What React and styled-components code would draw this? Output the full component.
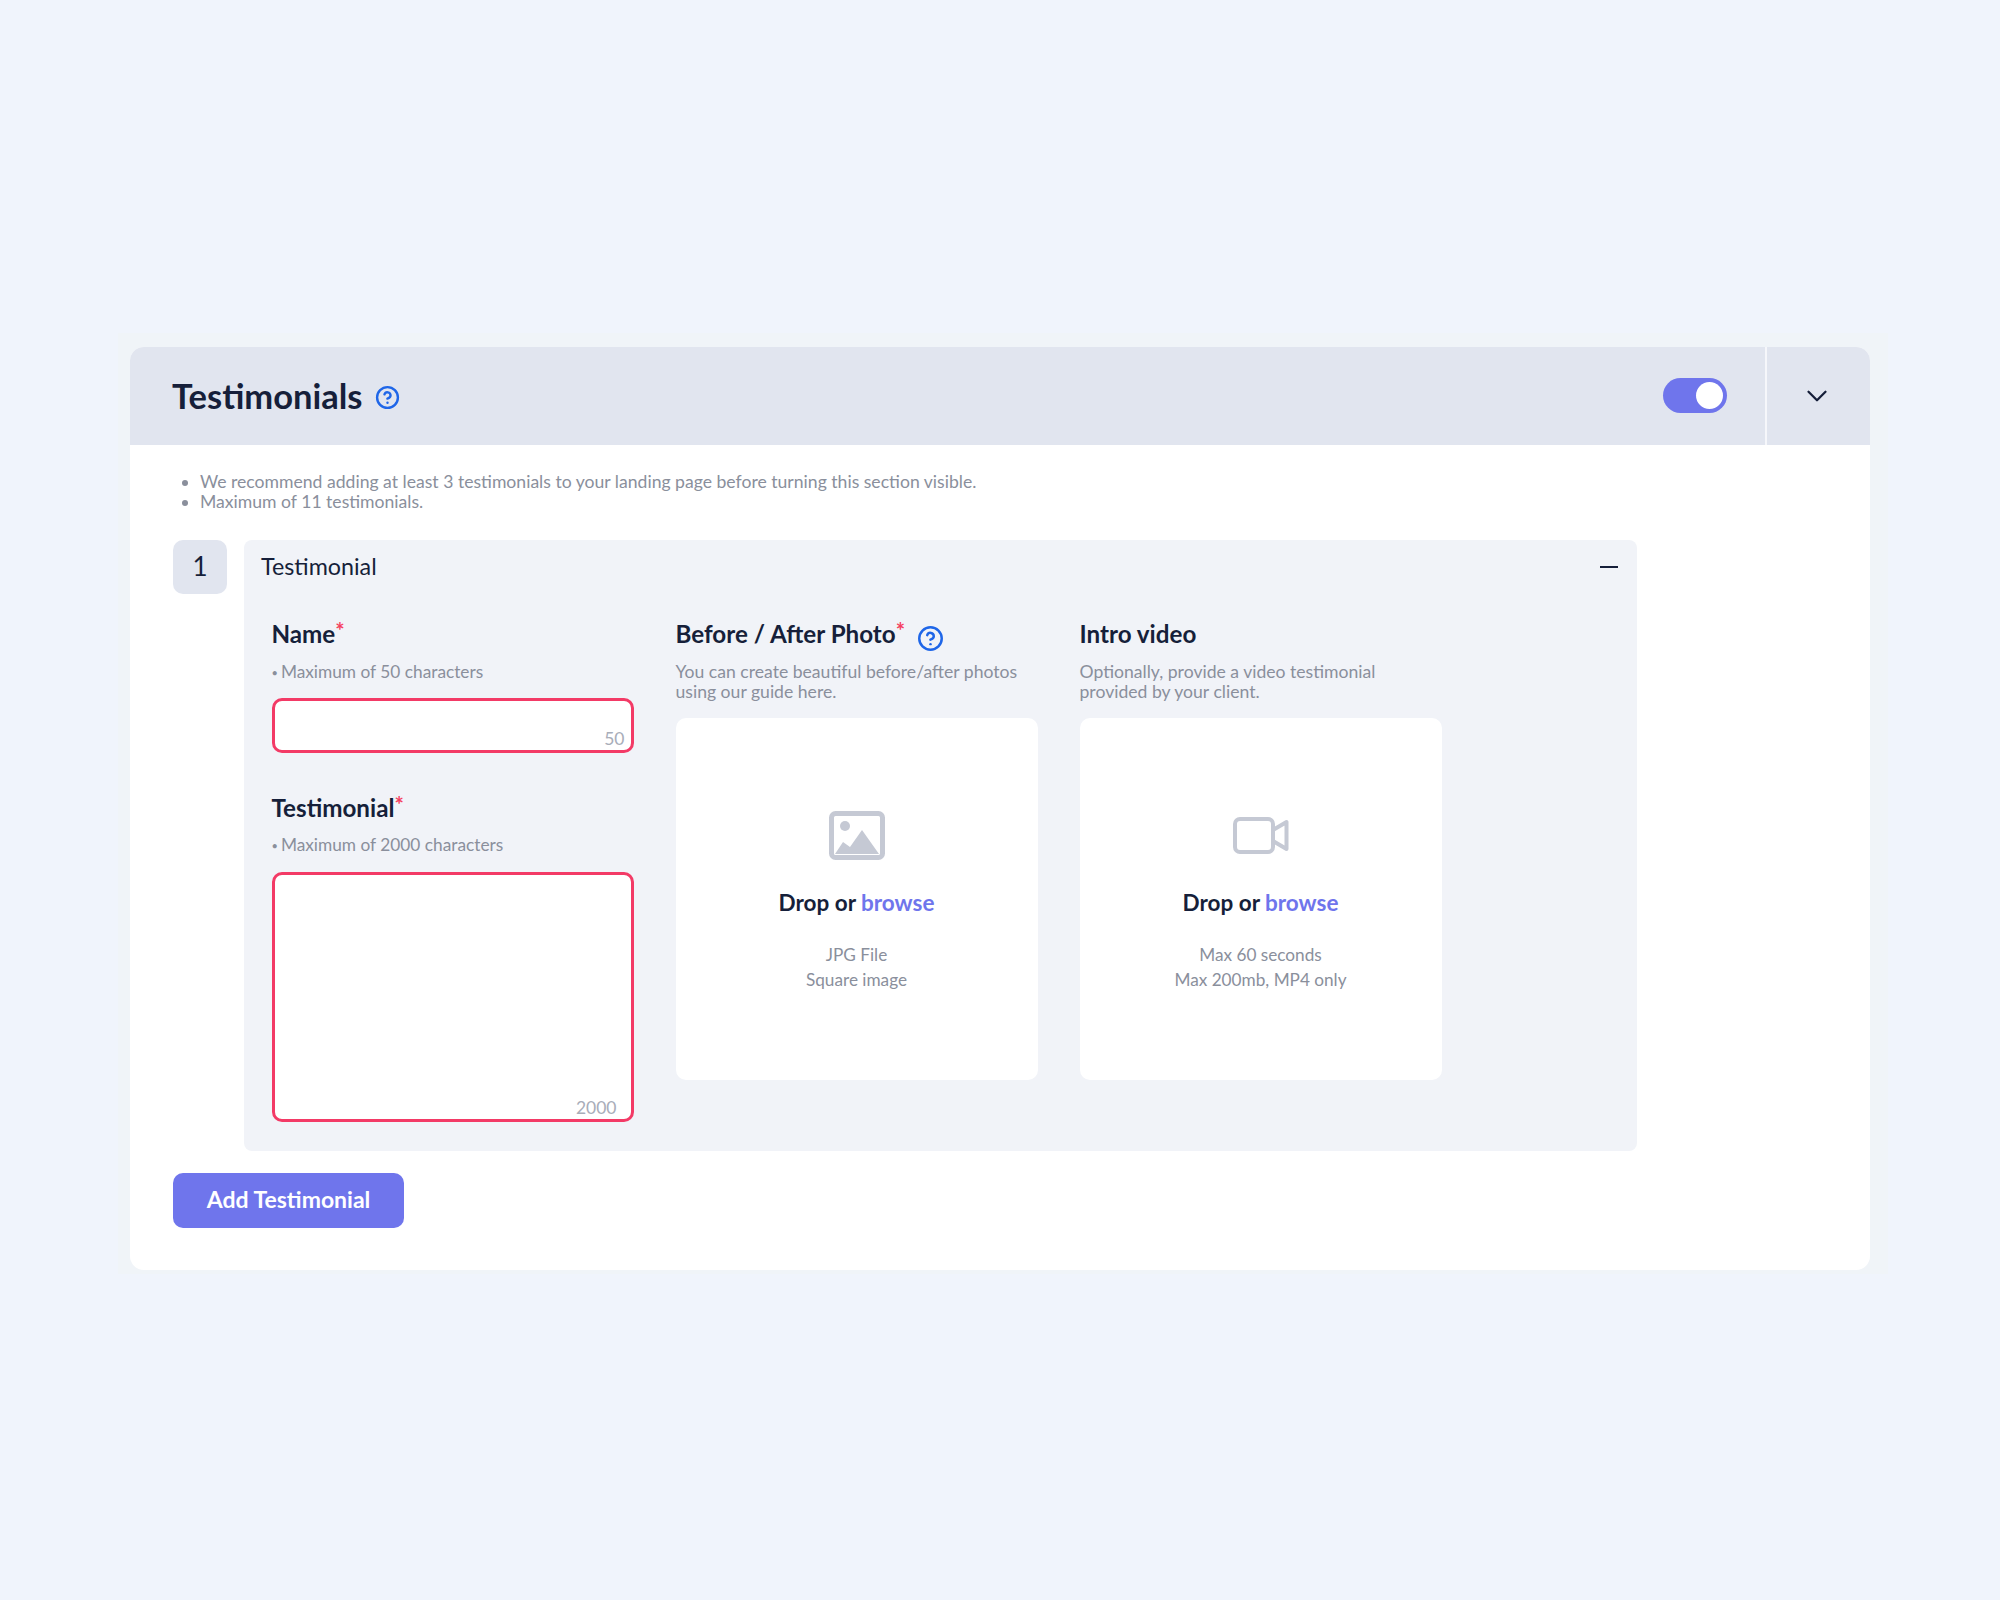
import React from "react";
import styled, { createGlobalStyle } from "styled-components";
import { CircleHelp, ChevronDown } from "lucide-react";

const GlobalStyle = createGlobalStyle`
  html, body {
    margin: 0;
    padding: 0;
    background: #f0f4fc;
    font-family: "Lato", "Liberation Sans", sans-serif;
  }
  * {
    box-sizing: border-box;
  }
`;

const Page = styled.div`
  min-height: 1600px;
  padding: 333px 112px 0 118px;
`;

const Halo = styled.div`
  padding: 14px 18px 4px 12px;
  background: #f0f4f8;
`;

const Card = styled.section`
  background: #ffffff;
  border-radius: 14px;
  overflow: hidden;
`;

const Header = styled.header`
  display: flex;
  align-items: center;
  height: 98px;
  padding-left: 42px;
  background: #e1e5ef;
`;

const Title = styled.h1`
  margin: 0;
  font-size: 34.5px;
  line-height: 40px;
  font-weight: 700;
  color: #161f3a;
`;

const HeaderHelp = styled.span`
  display: flex;
  margin: 3px 0 0 12px;
  color: #1f66e8;
`;

const Toggle = styled.div`
  display: flex;
  justify-content: flex-end;
  align-items: center;
  width: 64px;
  height: 35px;
  margin: -1px 38px 0 auto;
  padding-right: 4px;
  border-radius: 18px;
  background: #6f75ec;
`;

const Knob = styled.div`
  width: 27px;
  height: 27px;
  border-radius: 50%;
  background: #ffffff;
`;

const Collapse = styled.div`
  display: flex;
  justify-content: center;
  align-items: center;
  align-self: stretch;
  width: 105px;
  padding-right: 3px;
  border-left: 2px solid #f6f7fb;
  color: #161f3a;
`;

const Body = styled.div`
  padding: 27px 43px 41px;
`;

const Notes = styled.ul`
  margin: 0 0 28px;
  padding-left: 27px;
  font-size: 17.6px;
  line-height: 20px;
  color: #8a8f9c;
`;

const Row = styled.div`
  display: flex;
  gap: 17px;
`;

const Number = styled.div`
  display: flex;
  justify-content: center;
  align-items: center;
  flex: none;
  width: 54px;
  height: 54px;
  padding-bottom: 2px;
  border-radius: 10px;
  background: #e1e5ef;
  font-size: 26px;
  color: #161f3a;
`;

const Item = styled.div`
  width: 1393px;
  padding-bottom: 29px;
  border-radius: 8px;
  background: #f1f3f8;
`;

const ItemHeader = styled.div`
  display: flex;
  justify-content: space-between;
  align-items: center;
  height: 54px;
  padding: 0 19px 2px 17px;
  font-size: 23.3px;
  color: #161f3a;
`;

const Minus = styled.div`
  width: 18px;
  height: 2px;
  margin-top: 2px;
  background: #161f3a;
`;

const Columns = styled.div`
  display: grid;
  grid-template-columns: repeat(3, 362px);
  gap: 42px;
  padding: 25px 0 0 27.5px;
`;

const Field = styled.div`
  & + & {
    margin-top: 40px;
  }
`;

const Label = styled.div`
  display: flex;
  height: 30px;
  font-size: 24.2px;
  line-height: 30px;
  font-weight: 700;
  color: #161f3a;
`;

const Required = styled.span`
  margin-top: -3px;
  font-size: 22px;
  color: #f5405f;
`;

const LabelHelp = styled.span`
  display: flex;
  margin: 6px 0 0 12px;
  color: #1f66e8;
`;

const Hint = styled.p`
  margin: ${(props) => props.$top || 13}px 0 ${(props) => props.$gap || 16}px;
  font-size: ${(props) => props.$size || 17.6}px;
  line-height: 20px;
  color: #8a8f9c;
`;

const Bullet = styled.span`
  margin-right: 3px;
  font-size: 11px;
  vertical-align: 1px;
`;

const InputBox = styled.div`
  position: relative;
  height: ${(props) => props.$height}px;
  border: 3px solid #f33a66;
  border-radius: 10px;
  background: #ffffff;
`;

const Count = styled.span`
  position: absolute;
  right: ${(props) => props.$right}px;
  bottom: 0;
  font-size: 17.5px;
  line-height: 22px;
  color: #a8adb9;
`;

const Drop = styled.div`
  display: flex;
  flex-direction: column;
  align-items: center;
  height: 362px;
  padding-top: 93px;
  border-radius: 10px;
  background: #ffffff;
  text-align: center;
`;

const DropIcon = styled.div`
  display: flex;
  align-items: center;
  height: 49px;
`;

const DropTitle = styled.div`
  margin-top: 28px;
  font-size: 22.5px;
  line-height: 30px;
  font-weight: 700;
  color: #161f3a;
`;

const Browse = styled.span`
  color: #6f75ec;
`;

const DropNote = styled.div`
  margin-top: 24px;
  font-size: 17.2px;
  line-height: 25px;
  color: #8a8f9c;
`;

const AddButton = styled.button`
  display: block;
  width: 231px;
  height: 55px;
  margin: 22px 0 1px;
  padding: 0 0 3px;
  border: 0;
  border-radius: 10px;
  background: #6f75ec;
  font-family: inherit;
  font-size: 23px;
  font-weight: 700;
  color: #ffffff;
`;

const ImageIcon = () => (
  <svg width="56" height="49" viewBox="0 0 56 49">
    <rect x="2.5" y="2.5" width="51" height="44" rx="4" fill="none" stroke="#c5c9d4" strokeWidth="5" />
    <circle cx="16" cy="15" r="5" fill="#c5c9d4" />
    <path d="M6 43 L14 31 L21 36 L33 19 L50 43 Z" fill="#c5c9d4" />
  </svg>
);

const VideoIcon = () => (
  <svg width="56" height="37" viewBox="0 0 56 37">
    <rect x="2" y="2" width="38" height="33" rx="5" fill="none" stroke="#c5c9d4" strokeWidth="4" />
    <path d="M40 13 L53.5 5 V32 L40 24" fill="none" stroke="#c5c9d4" strokeWidth="4" strokeLinejoin="round" />
  </svg>
);

const App = () => {
  return (
    <Page>
      <GlobalStyle />
      <Halo>
        <Card>
          <Header>
            <Title>Testimonials</Title>
            <HeaderHelp>
              <CircleHelp size={25} strokeWidth={2.3} />
            </HeaderHelp>
            <Toggle>
              <Knob />
            </Toggle>
            <Collapse>
              <ChevronDown size={34} strokeWidth={1.6} />
            </Collapse>
          </Header>
          <Body>
            <Notes>
              <li>We recommend adding at least 3 testimonials to your landing page before turning this section visible.</li>
              <li>Maximum of 11 testimonials.</li>
            </Notes>
            <Row>
              <Number>1</Number>
              <Item>
                <ItemHeader>
                  Testimonial
                  <Minus />
                </ItemHeader>
                <Columns>
                  <div>
                    <Field>
                      <Label>
                        Name<Required>*</Required>
                      </Label>
                      <Hint $gap={15} $size={17.3}>
                        <Bullet>•</Bullet>Maximum of 50 characters
                      </Hint>
                      <InputBox $height={55}>
                        <Count $right={6}>50</Count>
                      </InputBox>
                    </Field>
                    <Field>
                      <Label>
                        Testimonial<Required>*</Required>
                      </Label>
                      <Hint $top={12} $size={17.3}>
                        <Bullet>•</Bullet>Maximum of 2000 characters
                      </Hint>
                      <InputBox $height={250}>
                        <Count $right={14}>2000</Count>
                      </InputBox>
                    </Field>
                  </div>
                  <div>
                    <Label>
                      Before / After Photo<Required>*</Required>
                      <LabelHelp>
                        <CircleHelp size={27} strokeWidth={2.2} />
                      </LabelHelp>
                    </Label>
                    <Hint>
                      You can create beautiful before/after photos
                      <br />
                      using our guide here.
                    </Hint>
                    <Drop>
                      <DropIcon>
                        <ImageIcon />
                      </DropIcon>
                      <DropTitle>
                        Drop or <Browse>browse</Browse>
                      </DropTitle>
                      <DropNote>
                        JPG File
                        <br />
                        Square image
                      </DropNote>
                    </Drop>
                  </div>
                  <div>
                    <Label>Intro video</Label>
                    <Hint>
                      Optionally, provide a video testimonial
                      <br />
                      provided by your client.
                    </Hint>
                    <Drop>
                      <DropIcon>
                        <VideoIcon />
                      </DropIcon>
                      <DropTitle>
                        Drop or <Browse>browse</Browse>
                      </DropTitle>
                      <DropNote>
                        Max 60 seconds
                        <br />
                        Max 200mb, MP4 only
                      </DropNote>
                    </Drop>
                  </div>
                </Columns>
              </Item>
            </Row>
            <AddButton>Add Testimonial</AddButton>
          </Body>
        </Card>
      </Halo>
    </Page>
  );
};

export default App;
